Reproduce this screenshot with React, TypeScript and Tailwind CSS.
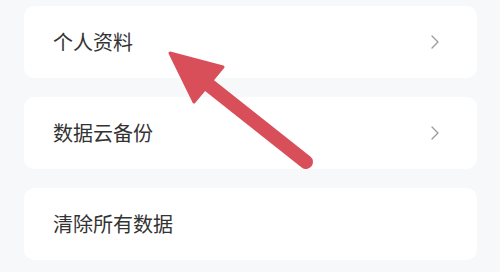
import React from "react";

const rows = ["个人资料", "数据云备份", "清除所有数据"];

function Chevron() {
  return (
    <svg width="8" height="14" viewBox="0 0 8 14" fill="none" className="shrink-0">
      <path d="M1 1l6 6-6 6" stroke="#9a9a9a" strokeWidth="1.3" strokeLinecap="round" strokeLinejoin="round" />
    </svg>
  );
}

export default function App() {
  return (
    <div
      className="relative w-[500px] h-[272px] overflow-hidden bg-[#f7f8fa]"
      style={{ fontFamily: '"Noto Sans CJK SC", "Noto Sans", sans-serif' }}
    >
      <div className="flex flex-col gap-[19px] pt-[6px] pl-[24px] pr-[23px]">
        {rows.map((label, i) => (
          <div key={label} className="flex items-center justify-between h-[72px] rounded-[10px] bg-white pl-[29px] pr-[38px]">
            <span className="text-[20px] leading-none text-[#333333]">{label}</span>
            {i < 2 && <Chevron />}
          </div>
        ))}
      </div>

      {/* annotation arrow */}
      <svg className="absolute left-0 top-0 pointer-events-none" width="500" height="272" viewBox="0 0 500 272">
        <line x1="205" y1="82" x2="306" y2="162" stroke="#d94f59" strokeWidth="14" strokeLinecap="round" />
        <polygon points="170,53 223,67 194,102" fill="#d94f59" stroke="#d94f59" strokeWidth="3" strokeLinejoin="round" />
      </svg>
    </div>
  );
}
